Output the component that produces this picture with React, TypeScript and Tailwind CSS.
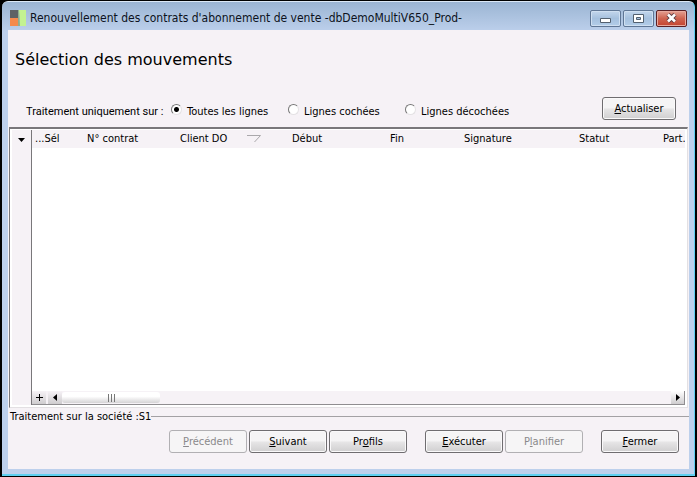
import type { ReactNode } from "react";

const columns = [
  { label: "...Sél", width: "w-[52px]" },
  { label: "N° contrat", width: "w-[93px]" },
  { label: "Client DO", width: "w-[112px]", sorted: true },
  { label: "Début", width: "w-[98px]" },
  { label: "Fin", width: "w-[74px]" },
  { label: "Signature", width: "w-[115px]" },
  { label: "Statut", width: "w-[84px]" },
  { label: "Part.", width: "" },
];

const filters = [
  { id: "all", label: "Toutes les lignes", width: "w-[117px]" },
  { id: "checked", label: "Lignes cochées", width: "w-[117px]" },
  { id: "unchecked", label: "Lignes décochées", width: "" },
];

function Button({
  children,
  disabled = false,
  width = "w-[78px]",
}: {
  children: ReactNode;
  disabled?: boolean;
  width?: string;
}) {
  return (
    <button
      type="button"
      disabled={disabled}
      className={`h-[23px] shrink-0 rounded-[3px] border whitespace-nowrap ${width} ${
        disabled
          ? "border-[#b1b0b3] bg-[#f6f5f6] text-[#8a898b]"
          : "border-[#6f6d70] bg-linear-to-b from-[#f5f4f5] from-45% via-[#e5e4e5] via-55% to-[#d0cfd0] text-black shadow-[inset_0_0_0_1px_#faf9fa]"
      }`}
    >
      {children}
    </button>
  );
}

function CaptionButton({
  label,
  danger = false,
  children,
}: {
  label: string;
  danger?: boolean;
  children: ReactNode;
}) {
  return (
    <button
      type="button"
      aria-label={label}
      className={`flex h-[17px] w-[31px] items-center justify-center rounded-[2px] border ${
        danger
          ? "border-[#5b1f24] bg-linear-to-b from-[#e3a093] from-0% via-[#cf6350] via-50% to-[#c4432f] shadow-[inset_0_0_0_1px_#e8a99d]"
          : "border-[#5f7695] bg-linear-to-b from-[#c3d6ec] from-0% via-[#a5c0de] via-50% to-[#b3cde9] shadow-[inset_0_0_0_1px_#cfdff1]"
      }`}
    >
      {children}
    </button>
  );
}

function TitleBar() {
  return (
    <header className="flex h-7 items-center pt-1 pr-[2px] pl-[2px]">
      <svg width="16" height="16" viewBox="0 0 16 16" className="shrink-0">
        <path d="M0 0h8v8H0z" fill="#5d6265" />
        <path d="M0 8h8v8H0z" fill="#f58a4c" />
        <path d="M9 0h7v16h-6z" fill="#c3f291" />
        <path d="M8 0h1l1 16H8z" fill="#8fae8d" />
      </svg>
      <h1 className="min-w-0 flex-1 truncate pl-1 text-[12px] leading-4 text-[#0c1220]">
        Renouvellement des contrats d'abonnement de vente -dbDemoMultiV650_Prod-
      </h1>
      <div className="flex gap-[2px]">
        <CaptionButton label="Réduire">
          <svg width="11" height="5" viewBox="0 0 11 5" className="mt-1">
            <path d="M.5.5h10v4H.5z" fill="#fff" stroke="#53606f" />
          </svg>
        </CaptionButton>
        <CaptionButton label="Agrandir">
          <svg width="11" height="9" viewBox="0 0 11 9">
            <path d="M.5.5h10v8H.5z" fill="#fff" stroke="#53606f" />
            <path d="M3.500 3.500h4v2h-4z" fill="#a5c0de" stroke="#53606f" />
          </svg>
        </CaptionButton>
        <CaptionButton label="Fermer la fenêtre" danger>
          <svg width="13" height="10" viewBox="0 0 13 10">
            <path d="M3 1.500l7 7M10 1.500l-7 7" stroke="#5c3a40" strokeWidth="4.500" />
            <path d="M3 1.500l7 7M10 1.500l-7 7" stroke="#fff" strokeWidth="2.600" />
          </svg>
        </CaptionButton>
      </div>
    </header>
  );
}

function FilterBar() {
  return (
    <div className="flex items-center pr-[13px] pl-[18px]">
      <fieldset className="flex min-w-0 flex-1 items-center">
        <legend className="float-left w-[145px] pt-[6px] font-[Roboto,'Liberation_Sans',sans-serif] whitespace-nowrap">
          Traitement uniquement sur :
        </legend>
        {filters.map((filter) => (
          <div key={filter.id} className={`flex items-center whitespace-nowrap ${filter.width}`}>
            <input
              type="radio"
              name="lines"
              id={filter.id}
              defaultChecked={filter.id === "all"}
              className="mt-[2px] size-[11px] shrink-0 appearance-none rounded-full border border-t-[#777] border-r-[#e4e2e4] border-b-[#e4e2e4] border-l-[#777] bg-white checked:bg-[radial-gradient(circle,black_2px,white_3px)]"
            />
            <label htmlFor={filter.id} className="pt-[6px] pl-[5px]">
              {filter.label}
            </label>
          </div>
        ))}
      </fieldset>
      <Button width="w-[74px]">
        <u>A</u>ctualiser
      </Button>
    </div>
  );
}

function ScrollBar() {
  return (
    <div className="flex h-[14px] items-center border-b border-[#8f8d90] bg-[#f6f2f6]">
      <button
        type="button"
        aria-label="Ajouter"
        className="flex h-full w-[14px] items-center justify-center bg-linear-to-b from-[#f6f2f6] to-[#cfcdcf]"
      >
        <svg width="7" height="7" viewBox="0 0 7 7">
          <path d="M3.500 0v7M0 3.500h7" stroke="#000" />
        </svg>
      </button>
      <button
        type="button"
        aria-label="Défiler à gauche"
        className="ml-[2px] flex h-full w-[14px] items-center justify-center bg-linear-to-b from-[#f6f2f6] to-[#cfcdcf]"
      >
        <svg width="4" height="7" viewBox="0 0 4 7">
          <path d="M4 0v7L0 3.500z" fill="#000" />
        </svg>
      </button>
      <div className="flex-1">
        <div className="flex h-[11px] w-[98px] items-center justify-center gap-[2px] rounded-[3px] bg-linear-to-b from-white from-40% to-[#d5d3d5]">
          <span className="h-2 w-px bg-[#777]" />
          <span className="h-2 w-px bg-[#777]" />
          <span className="h-2 w-px bg-[#777]" />
        </div>
      </div>
      <button
        type="button"
        aria-label="Défiler à droite"
        className="flex h-full w-[14px] items-center justify-center border-r border-[#8f8d90] bg-linear-to-b from-white to-[#cfcdcf]"
      >
        <svg width="4" height="7" viewBox="0 0 4 7">
          <path d="M0 0v7l4-3.500z" fill="#000" />
        </svg>
      </button>
    </div>
  );
}

function Grid() {
  return (
    <div className="flex min-h-0 flex-1 border-t-2 border-r border-b border-l border-t-[#79777a] border-r-[#e3e0e3] border-b-[#e3e0e3] border-l-[#79777a] bg-white">
      <div className="flex min-w-0 flex-1 pt-px pr-[2px] pb-[2px] pl-[2px]">
        <div className="w-[19px] shrink-0 bg-[#f6f2f6]">
          <button
            type="button"
            aria-label="Options de la liste"
            className="flex h-[19px] w-full items-center justify-center"
          >
            <svg width="7" height="4" viewBox="0 0 7 4">
              <path d="M0 0h7L3.500 4z" fill="#000" />
            </svg>
          </button>
        </div>
        <div className="flex min-w-0 flex-1 flex-col border-l border-[#79777a]">
          <div className="flex-1 overflow-hidden">
            <table className="w-full table-fixed border-collapse bg-[#f6f2f6]">
              <thead>
                <tr className="h-[18px] text-left">
                  {columns.map((column) => (
                    <th
                      key={column.label}
                      className={`p-0 pl-[3px] font-normal whitespace-nowrap ${column.width}`}
                    >
                      <span className="flex items-center">
                        {column.label}
                        {column.sorted && (
                          <svg width="14" height="8" viewBox="0 0 14 8" className="mr-7 ml-auto">
                            <path d="M0 .5h13.500L7.500 7" fill="none" stroke="#aaa8ab" />
                          </svg>
                        )}
                      </span>
                    </th>
                  ))}
                </tr>
              </thead>
              <tbody />
            </table>
          </div>
          <ScrollBar />
        </div>
      </div>
    </div>
  );
}

export default function App() {
  return (
    <div className="flex h-screen w-full bg-black px-[2px] pt-px pb-px font-['DejaVu_Sans_Condensed','Liberation_Sans',sans-serif] text-[11px] leading-[14px] text-black">
      <div className="flex min-w-0 flex-1 flex-col rounded-t-md border-t border-r border-b-2 border-t-[#dbe8f6] border-r-[#5fd0f0] border-b-[#5fd0f0] bg-linear-to-b from-[#9bb5d3] from-0% via-[#bdd0ec] via-[30px] to-[#bdd0ec] pr-[5px] pb-[5px] pl-[6px]">
        <TitleBar />
        <main className="flex min-h-0 flex-1 flex-col bg-[#f6f2f6]">
          <h2 className="px-[7px] pt-5 pb-[27px] font-['DejaVu_Sans',sans-serif] text-[16px] leading-5">
            Sélection des mouvements
          </h2>
          <FilterBar />
          <div className="flex min-h-0 flex-1 flex-col pt-[7px] pr-px pl-px">
            <Grid />
          </div>
          <div className="flex h-[17px] items-center pl-[2px]">
            <span className="whitespace-nowrap">Traitement sur la société :S1</span>
            <span className="h-px flex-1 bg-[#a3a1a4]" />
          </div>
          <footer className="flex justify-end gap-[2px] pt-[5px] pr-[10px] pb-4">
            <Button disabled>
              <u>P</u>récédent
            </Button>
            <Button>
              <u>S</u>uivant
            </Button>
            <Button>
              Pr<u>o</u>fils
            </Button>
            <div className="ml-4 flex gap-[2px]">
              <Button>
                <u>E</u>xécuter
              </Button>
              <Button disabled>
                P<u>l</u>anifier
              </Button>
            </div>
            <div className="ml-4 flex">
              <Button>
                <u>F</u>ermer
              </Button>
            </div>
          </footer>
        </main>
      </div>
    </div>
  );
}
